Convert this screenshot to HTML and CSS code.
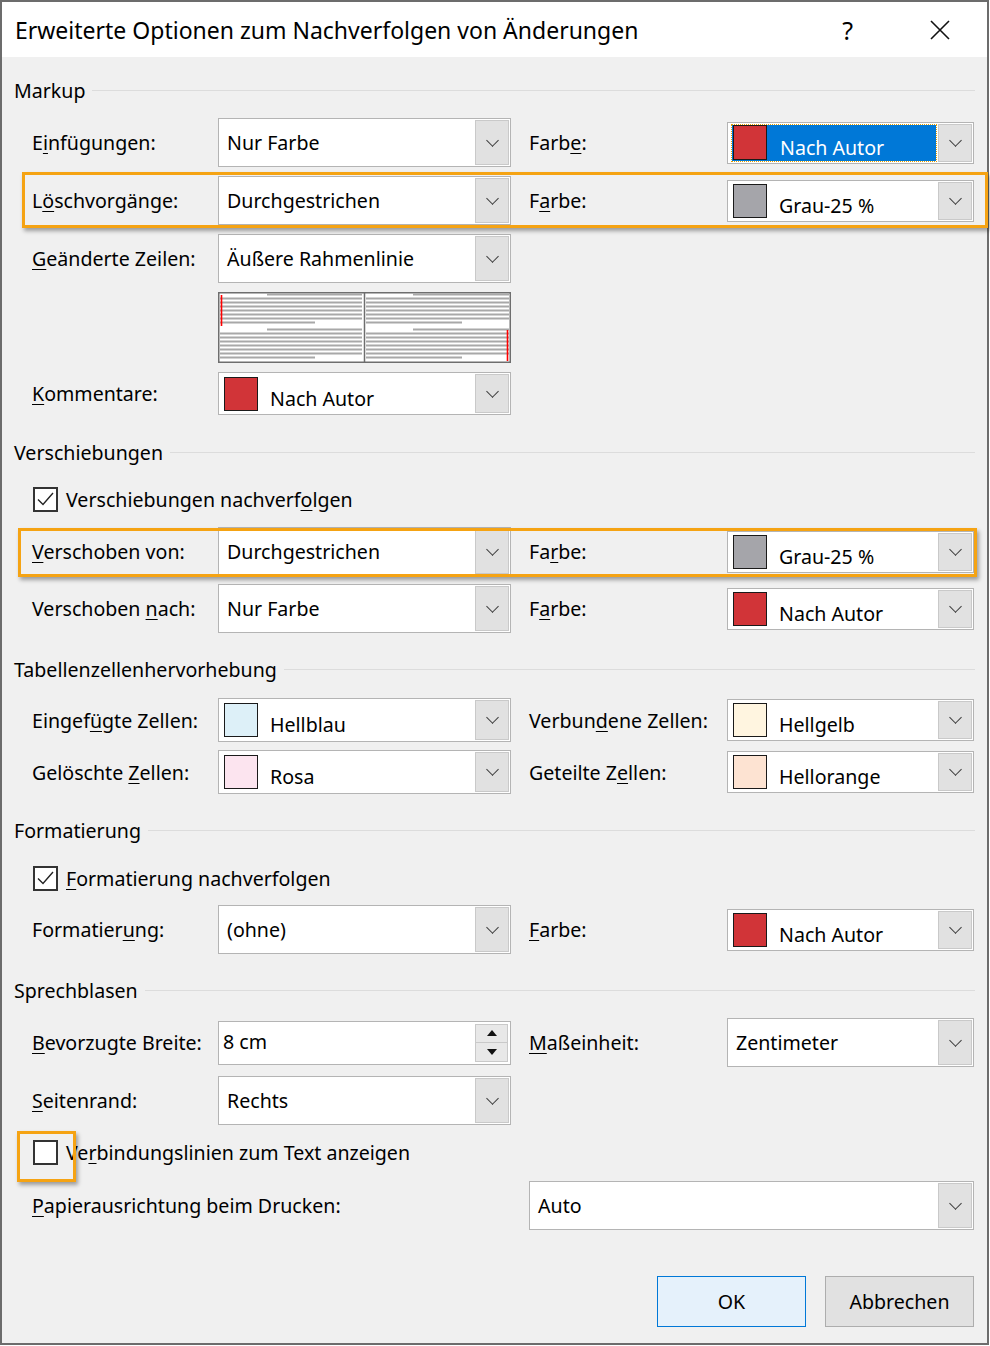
FILE: index.html
```html
<!DOCTYPE html>
<html lang="de">
<head>
    <meta charset="UTF-8">
    <title>Erweiterte Optionen zum Nachverfolgen von Änderungen</title>
    <link rel="stylesheet" href="styles.css">
</head>
<body>
    <div class="window">
        <div class="titlebar">
            <span class="title">Erweiterte Optionen zum Nachverfolgen von Änderungen</span>
            <span class="help">?</span>
            <svg class="close" width="20" height="20" viewBox="0 0 20 20">
                <path d="M1 1 L19 19 M19 1 L1 19" stroke="#111" stroke-width="1.6" fill="none"/>
            </svg>
        </div>

        <div class="content">
            <!-- Markup -->
            <div class="group-head gh-markup"><span>Markup</span></div>

            <div class="row r1">
                <label>E<u>i</u>nfügungen:</label>
                <div class="combo"><span class="val">Nur Farbe</span><span class="arrow"></span></div>
                <label>Farb<u>e</u>:</label>
                <div class="combo color small focused">
                    <span class="sel"><span class="swatch red"></span><span class="val">Nach Autor</span></span>
                    <span class="arrow"></span>
                </div>
            </div>

            <div class="row r2 hl hl-del">
                <label>L<u>ö</u>schvorgänge:</label>
                <div class="combo"><span class="val">Durchgestrichen</span><span class="arrow"></span></div>
                <label>F<u>a</u>rbe:</label>
                <div class="combo color small">
                    <span class="swatch grey"></span><span class="val">Grau-25 %</span><span class="arrow"></span>
                </div>
            </div>

            <div class="row r3">
                <label><u>G</u>eänderte Zeilen:</label>
                <div class="combo"><span class="val">Äußere Rahmenlinie</span><span class="arrow"></span></div>
            </div>

            <div class="row r-preview">
                <span></span>
                <svg class="preview" width="293" height="71" viewBox="0 0 293 71">
                    <rect x="0.75" y="0.75" width="291.5" height="69.5" fill="#fff" stroke="#6e6e6e" stroke-width="1.5"/>
                    <line x1="146.5" y1="0" x2="146.5" y2="71" stroke="#6e6e6e" stroke-width="1.5"/>
                    <g stroke="#a8a8a8" stroke-width="2">
                        <line x1="49" y1="2.5" x2="144" y2="2.5"/>
                        <line x1="2" y1="6.5" x2="144" y2="6.5"/>
                        <line x1="2" y1="10.5" x2="144" y2="10.5"/>
                        <line x1="2" y1="14.5" x2="144" y2="14.5"/>
                        <line x1="2" y1="18.5" x2="144" y2="18.5"/>
                        <line x1="2" y1="22.5" x2="144" y2="22.5"/>
                        <line x1="2" y1="26.5" x2="144" y2="26.5"/>
                        <line x1="2" y1="30.5" x2="97" y2="30.5"/>
                        <line x1="49" y1="37.5" x2="144" y2="37.5"/>
                        <line x1="2" y1="41.5" x2="144" y2="41.5"/>
                        <line x1="2" y1="45.5" x2="144" y2="45.5"/>
                        <line x1="2" y1="49.5" x2="144" y2="49.5"/>
                        <line x1="2" y1="53.5" x2="144" y2="53.5"/>
                        <line x1="2" y1="57.5" x2="144" y2="57.5"/>
                        <line x1="2" y1="61.5" x2="144" y2="61.5"/>
                        <line x1="2" y1="65.5" x2="97" y2="65.5"/>

                        <line x1="195" y1="2.5" x2="291" y2="2.5"/>
                        <line x1="148" y1="6.5" x2="291" y2="6.5"/>
                        <line x1="148" y1="10.5" x2="291" y2="10.5"/>
                        <line x1="148" y1="14.5" x2="291" y2="14.5"/>
                        <line x1="148" y1="18.5" x2="291" y2="18.5"/>
                        <line x1="148" y1="22.5" x2="291" y2="22.5"/>
                        <line x1="148" y1="26.5" x2="291" y2="26.5"/>
                        <line x1="148" y1="30.5" x2="244" y2="30.5"/>
                        <line x1="195" y1="37.5" x2="291" y2="37.5"/>
                        <line x1="148" y1="41.5" x2="291" y2="41.5"/>
                        <line x1="148" y1="45.5" x2="291" y2="45.5"/>
                        <line x1="148" y1="49.5" x2="291" y2="49.5"/>
                        <line x1="148" y1="53.5" x2="291" y2="53.5"/>
                        <line x1="148" y1="57.5" x2="291" y2="57.5"/>
                        <line x1="148" y1="61.5" x2="291" y2="61.5"/>
                        <line x1="148" y1="65.5" x2="244" y2="65.5"/>
                    </g>
                    <line x1="3.5" y1="3" x2="3.5" y2="34" stroke="#ff0000" stroke-width="1.6"/>
                    <line x1="289.5" y1="38" x2="289.5" y2="69" stroke="#ff0000" stroke-width="1.6"/>
                </svg>
            </div>

            <div class="row r-komm">
                <label><u>K</u>ommentare:</label>
                <div class="combo color">
                    <span class="swatch red"></span><span class="val">Nach Autor</span><span class="arrow"></span>
                </div>
            </div>

            <!-- Verschiebungen -->
            <div class="group-head gh-move"><span>Verschiebungen</span></div>

            <div class="check-row cr-move">
                <span class="checkbox checked">
                    <svg width="21" height="21" viewBox="0 0 21 21"><path d="M3 10.5 L8 15.5 L18 4" stroke="#222" stroke-width="1.4" fill="none"/></svg>
                </span>
                <span>Verschiebungen nachverf<u>o</u>lgen</span>
            </div>

            <div class="row r-von hl hl-move">
                <label><u>V</u>erschoben von:</label>
                <div class="combo"><span class="val">Durchgestrichen</span><span class="arrow"></span></div>
                <label>Fa<u>r</u>be:</label>
                <div class="combo color small">
                    <span class="swatch grey"></span><span class="val">Grau-25 %</span><span class="arrow"></span>
                </div>
            </div>

            <div class="row r-nach">
                <label>Verschoben <u>n</u>ach:</label>
                <div class="combo"><span class="val">Nur Farbe</span><span class="arrow"></span></div>
                <label>F<u>a</u>rbe:</label>
                <div class="combo color small">
                    <span class="swatch red"></span><span class="val">Nach Autor</span><span class="arrow"></span>
                </div>
            </div>

            <!-- Tabellenzellenhervorhebung -->
            <div class="group-head gh-table"><span>Tabellenzellenhervorhebung</span></div>

            <div class="row r-ez">
                <label>Eingef<u>ü</u>gte Zellen:</label>
                <div class="combo color">
                    <span class="swatch lightblue"></span><span class="val">Hellblau</span><span class="arrow"></span>
                </div>
                <label>Verbun<u>d</u>ene Zellen:</label>
                <div class="combo color small">
                    <span class="swatch lightyellow"></span><span class="val">Hellgelb</span><span class="arrow"></span>
                </div>
            </div>

            <div class="row r-gz">
                <label>Gelöschte <u>Z</u>ellen:</label>
                <div class="combo color">
                    <span class="swatch pink"></span><span class="val">Rosa</span><span class="arrow"></span>
                </div>
                <label>Geteilte Z<u>e</u>llen:</label>
                <div class="combo color small">
                    <span class="swatch lightorange"></span><span class="val">Hellorange</span><span class="arrow"></span>
                </div>
            </div>

            <!-- Formatierung -->
            <div class="group-head gh-format"><span>Formatierung</span></div>

            <div class="check-row cr-format">
                <span class="checkbox checked">
                    <svg width="21" height="21" viewBox="0 0 21 21"><path d="M3 10.5 L8 15.5 L18 4" stroke="#222" stroke-width="1.4" fill="none"/></svg>
                </span>
                <span><u>F</u>ormatierung nachverfolgen</span>
            </div>

            <div class="row r-format">
                <label>Formatier<u>u</u>ng:</label>
                <div class="combo"><span class="val">(ohne)</span><span class="arrow"></span></div>
                <label><u>F</u>arbe:</label>
                <div class="combo color small">
                    <span class="swatch red"></span><span class="val">Nach Autor</span><span class="arrow"></span>
                </div>
            </div>

            <!-- Sprechblasen -->
            <div class="group-head gh-balloon"><span>Sprechblasen</span></div>

            <div class="row r-width">
                <label><u>B</u>evorzugte Breite:</label>
                <div class="spin">
                    <span class="val">8 cm</span>
                    <span class="spin-btns">
                        <span class="spin-btn"><span class="tri up"></span></span>
                        <span class="spin-btn"><span class="tri down"></span></span>
                    </span>
                </div>
                <label><u>M</u>aßeinheit:</label>
                <div class="combo"><span class="val">Zentimeter</span><span class="arrow"></span></div>
            </div>

            <div class="row r-margin">
                <label><u>S</u>eitenrand:</label>
                <div class="combo"><span class="val">Rechts</span><span class="arrow"></span></div>
            </div>

            <div class="check-row cr-lines hl hl-check">
                <span class="checkbox"></span>
                <span>Ve<u>r</u>bindungslinien zum Text anzeigen</span>
            </div>

            <div class="row r-paper">
                <label class="wide"><u>P</u>apierausrichtung beim Drucken:</label>
                <div class="combo wide"><span class="val">Auto</span><span class="arrow"></span></div>
            </div>
        </div>

        <div class="footer">
            <button class="btn ok">OK</button>
            <button class="btn">Abbrechen</button>
        </div>
    </div>
</body>
</html>
```

FILE: styles.css
```css
:root {
    --ui-font: "Noto Sans", "Open Sans", "DejaVu Sans", sans-serif;
    --orange: #f5a313;
}

* {
    margin: 0;
    padding: 0;
    box-sizing: border-box;
}

body {
    margin: 0;
    background: #fff;
    font-family: var(--ui-font);
    font-size: 19.6px;
    color: #000;
}

u {
    text-decoration-thickness: 1px;
    text-underline-offset: 3px;
}

.window {
    width: 989px;
    height: 1345px;
    border: 2px solid #6c6c6c;
    background: #f0f0f0;
    display: flex;
    flex-direction: column;
}

/* Titelleiste */
.titlebar {
    height: 55px;
    background: #fff;
    display: flex;
    align-items: center;
    padding-left: 13px;
    flex-shrink: 0;
}

.title {
    font-size: 23px;
    flex: 1;
}

.help {
    font-size: 25px;
    margin-right: 77px;
}

.close {
    margin-right: 37px;
}

.content {
    padding: 0 12px;
}

/* Gruppenüberschriften */
.group-head {
    display: flex;
    align-items: center;
    height: 26px;
}

.group-head::after {
    content: "";
    flex: 1;
    height: 1px;
    background: #dcdcdc;
    margin-left: 7px;
}

.gh-markup { margin-top: 20px; }
.gh-move { margin-top: 24px; }
.gh-table { margin-top: 23px; }
.gh-format { margin-top: 23px; }
.gh-balloon { margin-top: 23px; }

/* Zeilen */
.row {
    display: grid;
    grid-template-columns: 168px 293px 180px 247px;
    column-gap: 18px;
    align-items: center;
    margin-left: 18px;
    width: 942px;
    height: 49px;
    white-space: nowrap;
}

.r1 { margin-top: 15px; }
.r2 { margin-top: 9px; }
.r3 { margin-top: 9px; }
.r-preview { margin-top: 9px; height: 71px; }
.r-komm { margin-top: 9px; height: 43px; }
.r-von { margin-top: 15px; }
.r-nach { margin-top: 8px; }
.r-ez { margin-top: 16px; height: 44px; }
.r-gz { margin-top: 8px; height: 44px; }
.r-format { margin-top: 14px; }
.r-width { margin-top: 15px; }
.r-margin { margin-top: 9px; }
.r-paper { margin-top: 16px; }

.row label.wide {
    grid-column: 1 / 3;
}

.row .combo.wide {
    grid-column: 3 / 5;
}

/* Kombinationsfelder */
.combo {
    height: 49px;
    display: flex;
    align-items: stretch;
    background: #fff;
    border: 1px solid #b4b4b4;
    padding: 1px;
}

.combo .val {
    flex: 1;
    padding-left: 7px;
    display: flex;
    align-items: center;
}

.arrow {
    width: 34px;
    background: #e1e1e1;
    border: 1px solid #c9c9c9;
    position: relative;
    flex-shrink: 0;
}

.arrow::after {
    content: "";
    position: absolute;
    left: 12px;
    top: 50%;
    width: 8px;
    height: 8px;
    margin-top: -7px;
    border-right: 1px solid #3a3a3a;
    border-bottom: 1px solid #3a3a3a;
    transform: rotate(45deg);
}

.combo.color {
    height: 44px;
}

.r-komm .combo.color {
    height: 43px;
}

.combo.small {
    height: 42px;
}

.combo.color .val {
    padding-left: 12px;
    padding-top: 9px;
}

.swatch {
    width: 34px;
    height: 34px;
    border: 1px solid #1a1a1a;
    align-self: center;
    margin-left: 4px;
    flex-shrink: 0;
}

.swatch.red { background: #d13438; }
.swatch.grey { background: #a5a5aa; }
.swatch.lightblue { background: #ddf0f8; }
.swatch.pink { background: #fce4ef; }
.swatch.lightyellow { background: #fff5e0; }
.swatch.lightorange { background: #fde3d2; }

/* markierter Eintrag */
.focused .sel {
    flex: 1;
    display: flex;
    align-items: stretch;
    background: #0078d7;
    outline: 1px dotted #e8a000;
    outline-offset: 0;
    margin: 1px 2px 1px 3px;
}

.focused .sel .swatch {
    margin-left: 1px;
    height: 35px;
}

.focused .sel .val {
    color: #fff;
    padding-left: 13px;
    padding-top: 10px;
}

/* Drehfeld */
.spin {
    height: 44px;
    display: flex;
    align-items: stretch;
    background: #fff;
    border: 1px solid #b4b4b4;
    padding: 2px 2px 2px 0;
}

.spin .val {
    flex: 1;
    padding-left: 4px;
    display: flex;
    align-items: center;
    padding-bottom: 2px;
}

.spin-btns {
    width: 33px;
    display: flex;
    flex-direction: column;
    border: 1px solid #c9c9c9;
}

.spin-btn {
    flex: 1;
    background: #e8e8e8;
    display: flex;
    align-items: center;
    justify-content: center;
}

.spin-btn + .spin-btn {
    border-top: 1px solid #c9c9c9;
}

.tri {
    width: 0;
    height: 0;
    border-left: 5px solid transparent;
    border-right: 5px solid transparent;
}

.tri.up { border-bottom: 6px solid #111; }
.tri.down { border-top: 6px solid #111; }

/* Kontrollkästchen */
.check-row {
    display: flex;
    align-items: center;
    gap: 8px;
    margin-left: 19px;
    height: 25px;
}

.cr-move { margin-top: 22px; }
.cr-format { margin-top: 23px; }
.cr-lines { margin-top: 15px; }

.checkbox {
    width: 25px;
    height: 25px;
    border: 2px solid #333;
    background: #fff;
    display: flex;
    align-items: center;
    justify-content: center;
    flex-shrink: 0;
}

/* orange Markierungen */
.hl {
    position: relative;
}

.hl::after {
    content: "";
    position: absolute;
    border: 3px solid var(--orange);
    box-shadow: 2px 3px 4px rgba(0, 0, 0, 0.35);
    pointer-events: none;
}

.hl-del::after {
    left: -10px;
    right: -14px;
    top: -4px;
    bottom: -3px;
}

.hl-move::after {
    left: -14px;
    right: -3px;
    top: 1px;
    bottom: -1px;
}

.hl-check::after {
    left: -16px;
    width: 53px;
    top: -9px;
    bottom: -17px;
}

/* Schaltflächen */
.footer {
    display: flex;
    justify-content: flex-end;
    gap: 19px;
    margin-top: 46px;
    padding-right: 13px;
}

.btn {
    width: 149px;
    height: 51px;
    font-family: var(--ui-font);
    font-size: 19.6px;
    color: #000;
    background: #e1e1e1;
    border: 1px solid #adadad;
}

.btn.ok {
    background: #e5f1fb;
    border-color: #0078d7;
}
```
